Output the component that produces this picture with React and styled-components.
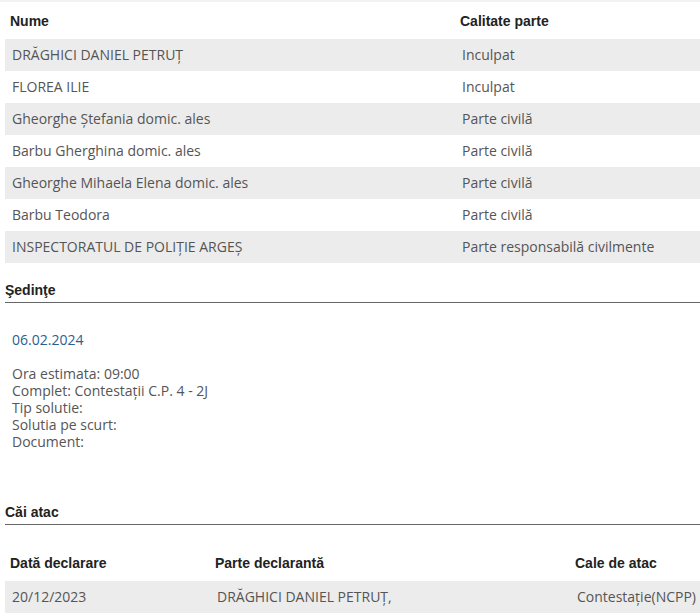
import styled, { createGlobalStyle } from "styled-components";

const GlobalStyle = createGlobalStyle`
  html, body {
    margin: 0;
    padding: 0;
    background: #fff;
  }
`;

const Page = styled.div`
  width: 700px;
  padding: 0 0 0 5px;
  box-sizing: border-box;
  border-top: 2px solid #f2f2f2;
  font-family: "Open Sans", "Noto Sans", sans-serif;
  font-size: 14px;
  color: #555;
`;

const Table = styled.table`
  width: 100%;
  border-collapse: collapse;
  border-spacing: 0;
  table-layout: fixed;
  margin-top: ${(p) => p.$top || 0}px;
`;

const Th = styled.th`
  text-align: left;
  font-family: "Liberation Sans", Arial, sans-serif;
  font-weight: bold;
  font-size: 14px;
  color: #222;
  height: 37px;
  padding: 0 5px;
  vertical-align: middle;
  width: ${(p) => p.$w || "auto"};
  box-sizing: border-box;
`;

const Tr = styled.tr`
  background: ${(p) => (p.$odd ? "#ececec" : "#fff")};
`;

const Td = styled.td`
  height: 31px;
  padding: 0 7px 1px;
  text-align: left;
  vertical-align: middle;
  white-space: nowrap;
`;

const SectionTitle = styled.h3`
  margin: ${(p) => p.$top || 0}px 0 0 0;
  padding: 0 0 4px 0;
  font-family: "Liberation Sans", Arial, sans-serif;
  font-size: 14px;
  font-weight: bold;
  color: #222;
  border-bottom: 1px solid #666;
`;

const Hearing = styled.div`
  padding: 27px 0 0 7px;
`;

const DateLink = styled.div`
  color: #2a6090;
  line-height: 20px;
  margin-bottom: 15px;
`;

const InfoLine = styled.div`
  line-height: 17px;
`;

const parties = [
  ["DRĂGHICI DANIEL PETRUȚ", "Inculpat"],
  ["FLOREA ILIE", "Inculpat"],
  ["Gheorghe Ștefania domic. ales", "Parte civilă"],
  ["Barbu Gherghina domic. ales", "Parte civilă"],
  ["Gheorghe Mihaela Elena domic. ales", "Parte civilă"],
  ["Barbu Teodora", "Parte civilă"],
  ["INSPECTORATUL DE POLIȚIE ARGEȘ", "Parte responsabilă civilmente"],
];

const info = [
  "Ora estimata: 09:00",
  "Complet: Contestații C.P. 4 - 2J",
  "Tip solutie:",
  "Solutia pe scurt:",
  "Document:",
];

export default function App() {
  return (
    <>
      <GlobalStyle />
      <Page>
        <Table>
          <thead>
            <tr>
              <Th $w="450px">Nume</Th>
              <Th>Calitate parte</Th>
            </tr>
          </thead>
          <tbody>
            {parties.map(([name, role], i) => (
              <Tr key={i} $odd={i % 2 === 0}>
                <Td>{name}</Td>
                <Td>{role}</Td>
              </Tr>
            ))}
          </tbody>
        </Table>

        <SectionTitle $top={19}>Şedinţe</SectionTitle>
        <Hearing>
          <DateLink>06.02.2024</DateLink>
          {info.map((line) => (
            <InfoLine key={line}>{line}</InfoLine>
          ))}
        </Hearing>

        <SectionTitle $top={54}>Căi atac</SectionTitle>
        <Table $top={19}>
          <thead>
            <tr>
              <Th $w="205px">Dată declarare</Th>
              <Th $w="360px">Parte declarantă</Th>
              <Th>Cale de atac</Th>
            </tr>
          </thead>
          <tbody>
            <Tr $odd>
              <Td>20/12/2023</Td>
              <Td>DRĂGHICI DANIEL PETRUȚ,</Td>
              <Td>Contestație(NCPP)</Td>
            </Tr>
          </tbody>
        </Table>
      </Page>
    </>
  );
}
